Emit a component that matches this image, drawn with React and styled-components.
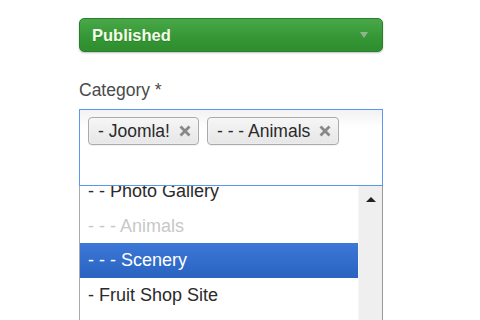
import React from 'react';
import styled, { createGlobalStyle } from 'styled-components';

const GlobalStyle = createGlobalStyle`
  html, body {
    margin: 0;
    padding: 0;
    background: #fff;
    overflow: hidden;
  }
  body {
    font-family: "Liberation Sans", Arial, sans-serif;
    color: #333;
  }
`;

const Page = styled.div`
  width: 383px;
  height: 320px;
  padding: 18px 0 0 79px;
  box-sizing: border-box;
  display: flex;
  flex-direction: column;
`;

const StatusSelect = styled.div`
  height: 34px;
  box-sizing: border-box;
  border: 1px solid #2b7d2b;
  border-radius: 5px;
  background: linear-gradient(#49a849, #349634 60%, #2f8e2f);
  box-shadow: 0 1px 2px rgba(0, 0, 0, 0.25);
  display: flex;
  align-items: center;
  justify-content: space-between;
  padding: 0 14px 0 12px;
  color: #f4fbe8;
  font-weight: bold;
  font-size: 16.5px;
  text-shadow: 0 1px 0 rgba(0, 0, 0, 0.15);
`;

const Caret = styled.span`
  width: 0;
  height: 0;
  border-left: 4px solid transparent;
  border-right: 4px solid transparent;
  border-top: 6px solid rgba(200, 200, 200, 0.6);
`;

const Label = styled.div`
  margin-top: 28px;
  font-size: 17.5px;
  line-height: 20px;
  color: #4a4a4a;
`;

const ChoiceBox = styled.div`
  margin-top: 9px;
  height: 77px;
  box-sizing: border-box;
  border: 1px solid #5b97f0;
  background: linear-gradient(#f2f2f2, #fff 18px);
  padding: 7px 8px;
  display: flex;
  align-items: flex-start;
  gap: 8px;
`;

const Tag = styled.span`
  height: 28px;
  box-sizing: border-box;
  border: 1px solid #aaa;
  border-radius: 4px;
  background: linear-gradient(#f6f6f6, #e6e6e6);
  box-shadow: 0 0 2px #fff inset, 0 1px 0 rgba(0, 0, 0, 0.05);
  display: flex;
  align-items: center;
  gap: 9px;
  padding: 0 7px 0 9px;
  font-size: 17.5px;
  color: #2a2a2a;
  white-space: nowrap;
`;

const Close = styled.svg`
  width: 12px;
  height: 12px;
  flex: none;
`;

const Drop = styled.div`
  flex: 1;
  display: flex;
  border-left: 1px solid #aaa;
  border-right: 1px solid #999;
  overflow: hidden;
`;

const Results = styled.ul`
  list-style: none;
  margin: -12px 0 0;
  padding: 0;
  flex: 1;
`;

const Item = styled.li`
  height: 34.5px;
  line-height: 34.5px;
  padding-left: 8px;
  font-size: 18px;
  white-space: nowrap;
  color: ${(p) => (p.$disabled ? '#c8c8c8' : p.$active ? '#fff' : '#2a2a2a')};
  background: ${(p) =>
    p.$active ? 'linear-gradient(#3c78d8, #2a63c0)' : 'transparent'};
`;

const Scrollbar = styled.div`
  width: 24px;
  flex: none;
  background: #efefef;
  border-left: 1px solid #f6f6f6;
  display: flex;
  justify-content: center;
  padding-top: 11px;
  box-sizing: border-box;
`;

const UpArrow = styled.span`
  width: 0;
  height: 0;
  border-left: 5px solid transparent;
  border-right: 5px solid transparent;
  border-bottom: 5px solid #222;
`;

const CloseIcon = () => (
  <Close viewBox="0 0 12 12">
    <path d="M1.5 1.5 L10.5 10.5 M10.5 1.5 L1.5 10.5" stroke="#888" strokeWidth="2.8" strokeLinecap="butt" />
  </Close>
);

const items = [
  { label: '- - Photo Gallery' },
  { label: '- - - Animals', disabled: true },
  { label: '- - - Scenery', active: true },
  { label: '- Fruit Shop Site' },
];

const App = () => {
  return (
    <>
      <GlobalStyle />
      <Page>
        <StatusSelect>
          Published
          <Caret />
        </StatusSelect>

        <Label>Category *</Label>

        <ChoiceBox>
          <Tag>
            - Joomla!
            <CloseIcon />
          </Tag>
          <Tag>
            - - - Animals
            <CloseIcon />
          </Tag>
        </ChoiceBox>

        <Drop>
          <Results>
            {items.map((item) => (
              <Item key={item.label} $disabled={item.disabled} $active={item.active}>
                {item.label}
              </Item>
            ))}
          </Results>
          <Scrollbar>
            <UpArrow />
          </Scrollbar>
        </Drop>
      </Page>
    </>
  );
};

export default App;
